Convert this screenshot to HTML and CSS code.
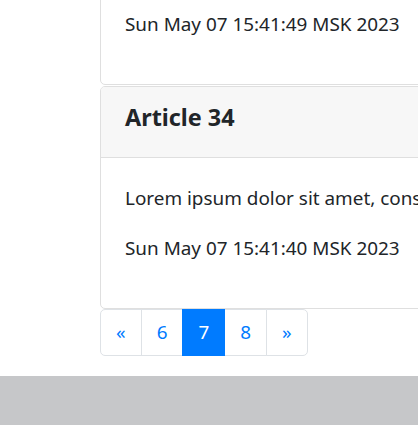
FILE: index.html
```html
<!DOCTYPE html>
<html lang="en">
<head>
<meta charset="utf-8">
<title>Articles</title>
<link rel="stylesheet" href="styles.css">
</head>
<body>
<main class="page">
  <div class="articles">
    <div class="card">
      <div class="card-header"><h5 class="card-title">Article 35</h5></div>
      <div class="card-body">
        <p>Lorem ipsum dolor sit amet, consectetur adipiscing elit, sed do eiusmod tempor incididunt ut labore et dolore magna aliqua.</p>
        <p>Sun May 07 15:41:49 MSK 2023</p>
      </div>
    </div>
    <div class="card">
      <div class="card-header"><h5 class="card-title">Article 34</h5></div>
      <div class="card-body">
        <p>Lorem ipsum dolor sit amet, consectetur adipiscing elit, sed do eiusmod tempor incididunt ut labore et dolore magna aliqua.</p>
        <p>Sun May 07 15:41:40 MSK 2023</p>
      </div>
    </div>
  </div>
  <nav>
    <ul class="pagination">
      <li class="page-item"><a class="page-link" href="#">«</a></li>
      <li class="page-item"><a class="page-link" href="#">6</a></li>
      <li class="page-item active"><a class="page-link" href="#">7</a></li>
      <li class="page-item"><a class="page-link" href="#">8</a></li>
      <li class="page-item"><a class="page-link" href="#">»</a></li>
    </ul>
  </nav>
</main>
<footer class="footer"></footer>
</body>
</html>
```
FILE: styles.css
```css
html, body {
  margin: 0;
  overflow: hidden;
  background: #fff;
}
body {
  font-family: "Noto Sans", "Open Sans", sans-serif;
  font-size: 18.9px;
  line-height: 30px;
  color: #212529;
}
.page {
  margin-top: -138px;
  padding-left: 100px;
}
.articles {
  width: 900px;
}
.card {
  border: 1px solid #dfdfdf;
  border-radius: 5px;
  background: #fff;
}
.card + .card {
  margin-top: 1px;
}
.card-header {
  background: #f7f7f7;
  border-bottom: 1px solid #dfdfdf;
  padding: 15px 24px;
  border-radius: 4px 4px 0 0;
}
.card-title {
  margin: 0 0 10px;
  font-size: 23.4px;
  font-weight: 700;
  line-height: 30px;
}
.card-body {
  padding: 25px 24px;
}
.card-body p {
  margin: 0 0 20px;
  white-space: nowrap;
}
.pagination {
  display: flex;
  list-style: none;
  margin: 0 0 20px;
  padding: 0;
}
.page-link {
  display: block;
  padding: 10px 15px;
  line-height: 25px;
  color: #007bff;
  text-decoration: none;
  border: 1px solid #dee2e6;
  margin-left: -1px;
  background: #fff;
}
.page-item:first-child .page-link {
  margin-left: 0;
  border-radius: 5px 0 0 5px;
}
.page-item:last-child .page-link {
  border-radius: 0 5px 5px 0;
}
.page-item.active .page-link {
  background: #007bff;
  border-color: #007bff;
  color: #fff;
  position: relative;
}
.footer {
  height: 60px;
  background: #c6c7c9;
}
```
